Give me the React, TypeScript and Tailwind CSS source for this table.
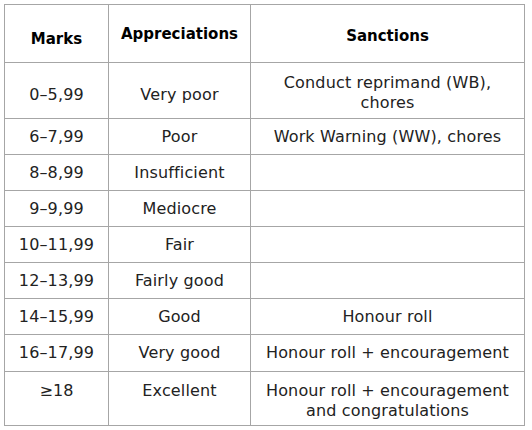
import React from "react";

type Row = { m: string; a: string; s: string[] };

const rows: Row[] = [
  { m: "0–5,99", a: "Very poor", s: ["Conduct reprimand (WB),", "chores"] },
  { m: "6–7,99", a: "Poor", s: ["Work Warning (WW), chores"] },
  { m: "8–8,99", a: "Insufficient", s: [] },
  { m: "9–9,99", a: "Mediocre", s: [] },
  { m: "10–11,99", a: "Fair", s: [] },
  { m: "12–13,99", a: "Fairly good", s: [] },
  { m: "14–15,99", a: "Good", s: ["Honour roll"] },
  { m: "16–17,99", a: "Very good", s: ["Honour roll + encouragement"] },
  { m: "≥18", a: "Excellent", s: ["Honour roll + encouragement", "and congratulations"] },
];

export default function App() {
  const font = { fontFamily: '"DejaVu Sans", sans-serif' };
  return (
    <div className="w-[532px] h-[430px] bg-white pl-[4px] pt-[4px]" style={font}>
      <div className="w-[521px] grid grid-cols-[103px_141px_273px] grid-rows-[57px_55px_35px_35px_35px_35px_35px_35px_36px_53px] gap-px bg-[#a6a6a6] p-px text-[#222222]">
        <div className="bg-white flex items-center justify-center pt-[11px] text-[15px] font-bold leading-[20px] text-black">Marks</div>
        <div className="bg-white flex items-center justify-center pt-[0px] text-[15px] font-bold leading-[20px] text-black">Appreciations</div>
        <div className="bg-white flex items-center justify-center pt-[5px] text-[15px] font-bold leading-[20px] text-black">Sanctions</div>
        {rows.map((r, i) => {
          const last = i === rows.length - 1;
          const first = i === 0;
          const pad = first ? "pt-[8px]" : "";
          const side = last
            ? "bg-white flex items-start justify-center pt-[9px] text-[16px] leading-[20px] tracking-[0.15px]"
            : `bg-white flex items-center justify-center ${pad} text-[16px] leading-[20px] tracking-[0.15px]`;
          return (
            <React.Fragment key={i}>
              <div className={side}>{r.m}</div>
              <div className={side}>{r.a}</div>
              <div
                className={`bg-white flex flex-col items-center justify-center ${first ? "pt-[5px]" : ""} ${last ? "pt-[4px]" : ""} text-[16px] leading-[20px] tracking-[0.15px] text-center`}
              >
                {r.s.map((t, j) => (
                  <span key={j}>{t}</span>
                ))}
              </div>
            </React.Fragment>
          );
        })}
      </div>
    </div>
  );
}
